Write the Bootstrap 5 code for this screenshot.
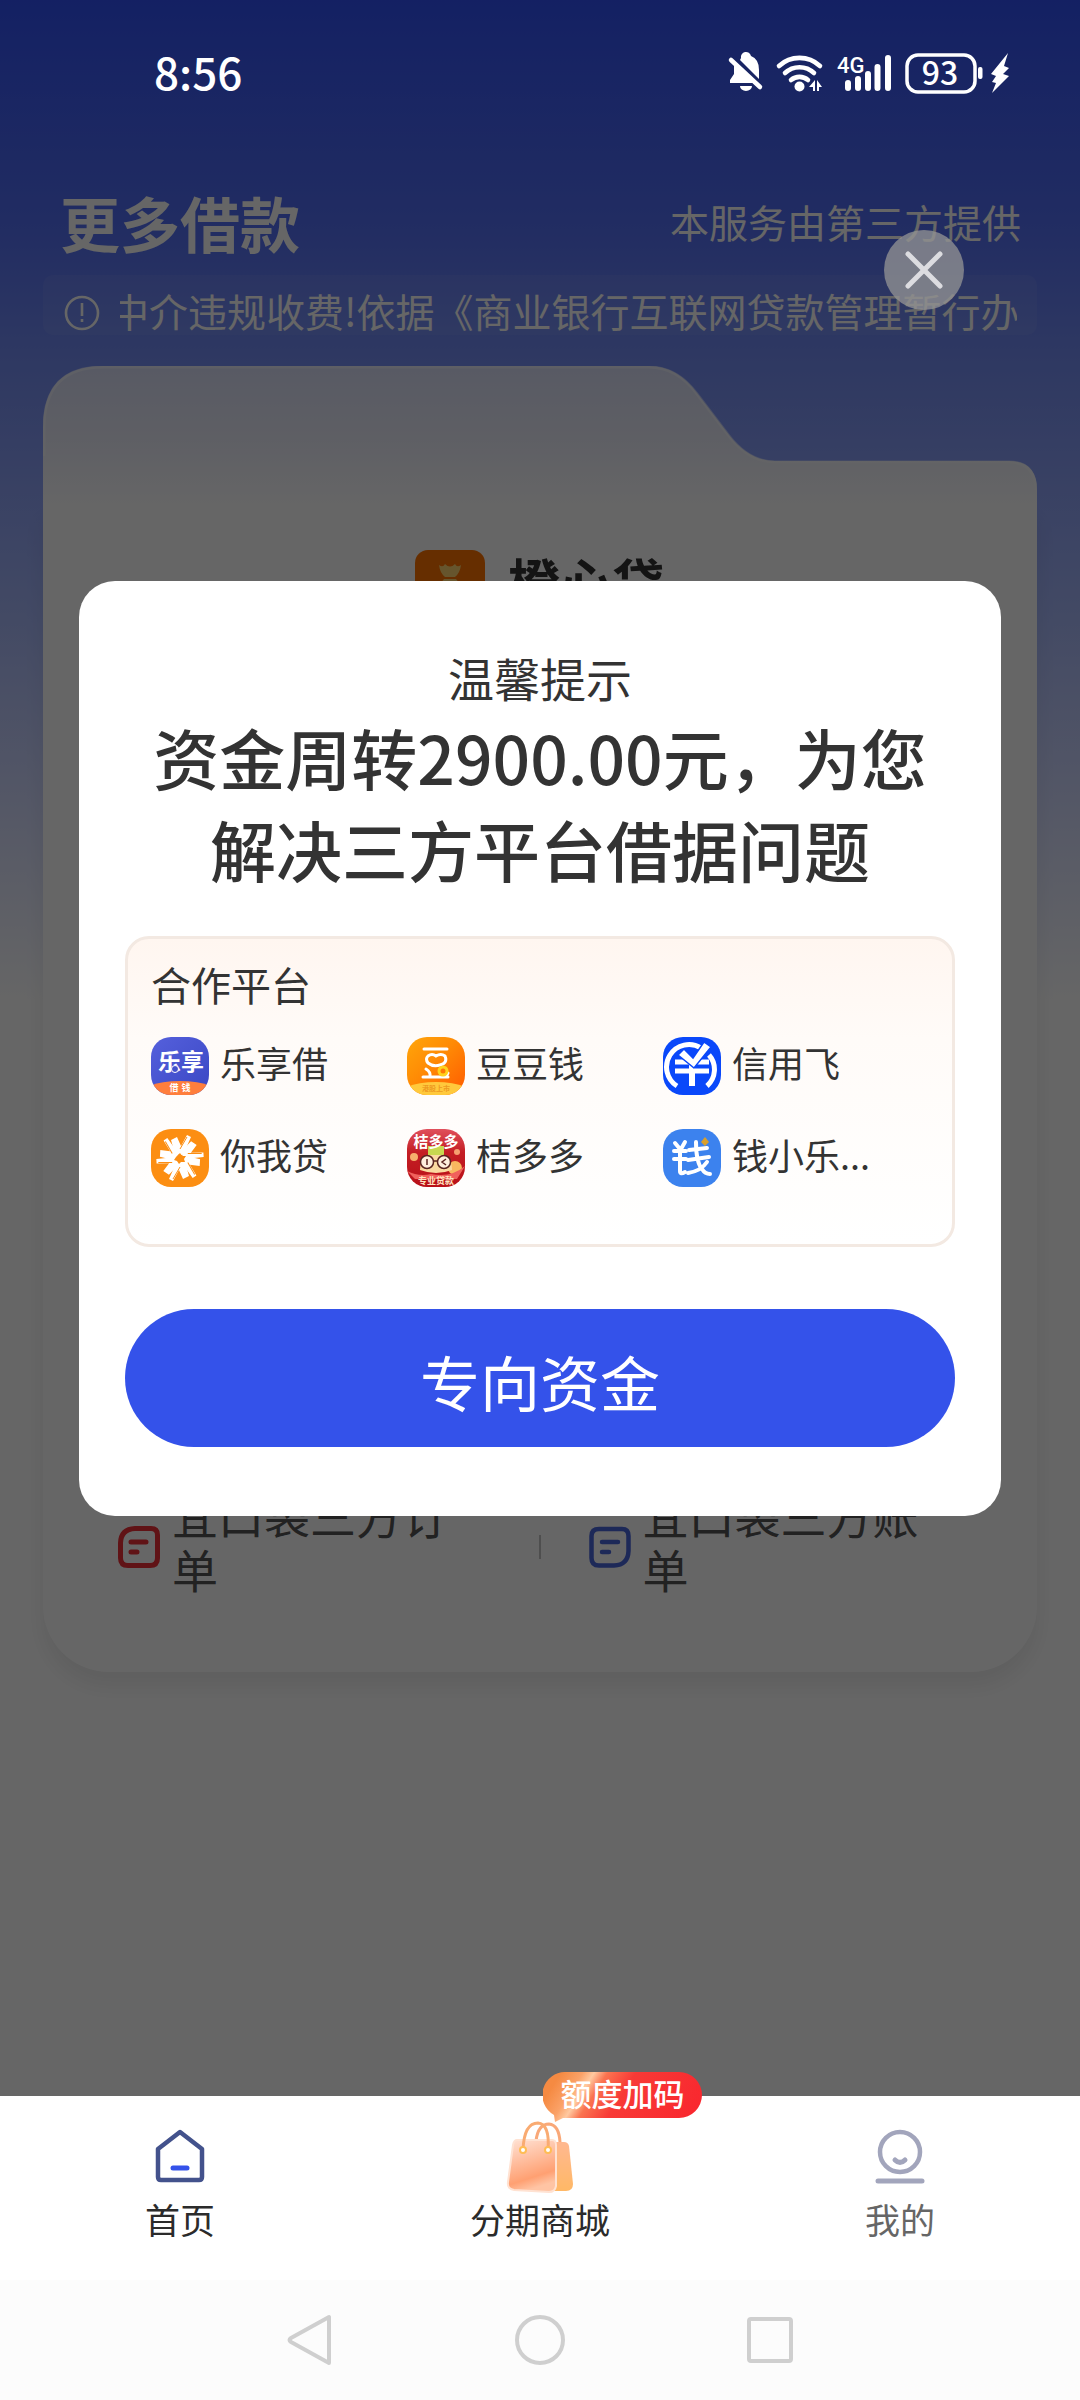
<!DOCTYPE html>
<html lang="zh-CN">
<head>
<meta charset="utf-8">
<meta name="viewport" content="width=device-width, initial-scale=1">
<title>更多借款</title>
<link rel="stylesheet" href="https://cdn.jsdelivr.net/npm/bootstrap@5.3.0/dist/css/bootstrap.min.css">
<style>
  body { font-family: "Noto Sans CJK SC", sans-serif; color: #333; background: #fff; }
  a { color: inherit; text-decoration: none; }
  svg { display: block; flex-shrink: 0; }
  .screen { background: linear-gradient(180deg, #3252f8 0, #5570f5 230px, #738cf5 350px, #a8b9fb 620px, #d2daff 800px, #fff 1000px); }
  .status-bar { height: 146px; padding: 0 65px 4px 154px; z-index: 3; color: #fff; }
  .status-bar svg { margin-top: 4px; }
  .clock { font-size: 44px; line-height: 54px; font-weight: 500; }
  .page-head { height: 129px; padding: 0 59px 0 60px; color: #fff; }
  .page-title { font-size: 60px; line-height: 152px; font-weight: 700; }
  .provider { font-size: 39px; line-height: 150px; }
  .notice { height: 60px; margin: 0 43px; padding: 0 20px 0 21px; gap: 20px; color: #fff; font-size: 39px; background: rgba(255,255,255,.06); border-radius: 10px; }
  .notice-text { line-height: 70px; height: 70px; text-indent: -10px; }
  .folder { margin: 31px 43px 424px; }
  .folder-tab { width: 100%; height: 140px; }
  .folder-body { background: #fff; border-radius: 0 0 66px 66px; padding: 44px 76px 65px 75px; box-shadow: 0 14px 20px rgba(0,0,0,.07); }
  .brand { gap: 23px; height: 70px; font-size: 52px; font-weight: 700; line-height: 62px; color: #333; }
  .entries { margin-top: 867px; font-size: 46px; line-height: 54px; color: #555; }
  .entry { gap: 12px; flex: 1 1 0; }
  .entry span { padding-bottom: 12px; }
  .entry:first-child { padding-right: 48px; }
  .entry:last-child { padding-left: 48px; }
  .entry-rule { width: 2px; height: 24px; background: #c4c4c4; }
  .shade { background: rgba(0,0,0,.6); z-index: 2; padding: 0 79px; }
  .close-btn { top: 230px; right: 116px; width: 80px; height: 80px; border-radius: 50%; background: rgba(150,150,150,.75); }
  .dialog { border-radius: 36px; padding: 63px 46px 69px; }
  .dialog-hint { font-size: 46px; line-height: 66px; }
  .dialog-title { font-size: 66px; line-height: 92px; font-weight: 500; margin: 0 0 42px; }
  .partners { border: 3px solid #f3e9e2; border-radius: 24px; background: linear-gradient(180deg, #fff6f0 0, #fffbf8 100px, #fff 100%); padding: 17px 33px 57px 23px; }
  .partners-title { font-size: 40px; line-height: 56px; margin: 0 0 25px; font-weight: 400; }
  .partner-list { row-gap: 34px; font-size: 36px; }
  .partner { gap: 11px; }
  .partner span { line-height: 51px; }
  .go-btn { margin-top: 62px; height: 138px; border: 0; border-radius: 69px; background: #3452ea; color: #fff; font-size: 60px; line-height: 90px; padding: 6px 0 0; }
  .tab-bar { height: 184px; z-index: 4; font-size: 35px; line-height: 50px; color: #2b2b2b; }
  .tab-item { flex: 1 1 0; padding-top: 22px; }
  .tab-item.dim { color: #666; }
  .tip { left: 50%; top: -24px; margin-left: 3px; width: 159px; height: 54px; }
  .tip-text { left: 0; top: 0; width: 159px; line-height: 41px; font-size: 31px; font-weight: 500; color: #fff; }
  .sys-nav { height: 120px; background: #fcfcfc; padding: 0 285px; }
  .sys-nav button { border: 0; background: none; padding: 0; }
</style>
<script src="https://cdn.jsdelivr.net/npm/bootstrap@5.3.0/dist/js/bootstrap.bundle.min.js"></script>
</head>
<body class="d-flex flex-column min-vh-100">
<main class="screen position-relative flex-grow-1">
  <div class="status-bar d-flex align-items-center justify-content-between position-relative">
    <span class="clock">8:56</span>
    <svg width="290" height="46" viewBox="725 50 290 46" fill="#fff" aria-label="状态">
      <path d="M741 58a5 5 0 0 1 10-2q8 3 8 14v9L740 60zM734 62l24 21H730v-3l4-6zM740 86h12a6 5 0 0 1-12 0z"/>
      <path d="M731 60l29 27" stroke="#fff" stroke-width="4.500" stroke-linecap="round"/>
      <g fill="none" stroke="#fff" stroke-width="4.600" stroke-linecap="round"><path d="M779 66a30 30 0 0 1 41 0"/><path d="M785 73a21 21 0 0 1 29 0"/><path d="M791 80a13 13 0 0 1 17 0"/></g>
      <circle cx="799.500" cy="86.500" r="5"/>
      <path d="M815 80v11h-2v-4h-4zM817 91V80l5 7h-3v4z"/>
      <text x="837" y="73" font-size="22" font-weight="500" font-family="Roboto, sans-serif">4G</text>
      <g stroke="#fff" stroke-width="6" stroke-linecap="round"><path d="M848 83v5M858 79v9M868 74v14M877.500 67v21M888 58v30"/></g>
      <rect x="907" y="55" width="68" height="37" rx="11" fill="none" stroke="#fff" stroke-width="3.500"/>
      <text x="940" y="85" font-size="32" font-weight="500" text-anchor="middle">93</text>
      <rect x="978" y="67" width="4.500" height="12" rx="2"/>
      <path d="M1008 53l-17 21 5 2-4 6 4 1-4 10 17-17-6-2 6-6-5-2z"/>
    </svg>
  </div>
  <header class="page-head d-flex align-items-start justify-content-between">
    <h1 class="page-title m-0">更多借款</h1>
    <span class="provider">本服务由第三方提供</span>
  </header>
  <div class="notice d-flex align-items-start">
    <svg width="36" height="60" viewBox="0 0 36 60" fill="none" stroke="#fff" stroke-width="2.600"><circle cx="18" cy="38" r="16"/><path d="M18 28v13M18 44v3"/></svg>
    <div class="notice-text flex-grow-1 overflow-hidden text-nowrap">中介违规收费!依据《商业银行互联网贷款管理暂行办法》</div>
  </div>
  <section class="folder">
    <svg class="folder-tab" viewBox="0 0 994 140" preserveAspectRatio="none">
      <defs><linearGradient id="tabFill" x1="0" y1="0" x2="0" y2="1"><stop offset="0" stop-color="#dce1fb"/><stop offset=".5" stop-color="#ebedfb"/><stop offset="1" stop-color="#fff"/></linearGradient></defs>
      <path d="M0 141V62Q0 0 60 0H606Q634 0 654 27L686 69Q706 95 732 95H966Q994 95 994 124V141z" fill="url(#tabFill)"/>
      <path d="M1 90V62Q1 1 60 1H606Q634 1 654 28L686 70Q706 96 732 96H966Q992 96 993 124" fill="none" stroke="#fff" stroke-opacity=".45" stroke-width="3"/>
    </svg>
    <div class="folder-body">
      <div class="brand d-flex justify-content-center">
        <svg width="70" height="70" viewBox="0 0 70 70"><rect width="70" height="70" rx="13" fill="#ff7300"/><path d="M24 15q4 3 6-1 5 5 10 0 2 4 6 1-1 8-6 12H30q-5-4-6-12zM29 29h12q12 13 12 25-18 10-36 0 0-12 12-25z" fill="#ffd470"/></svg>
        <span>橙心贷</span>
      </div>
      <div class="entries d-flex align-items-center">
        <a href="#" class="entry d-flex align-items-center">
          <svg width="42" height="42" viewBox="0 0 42 42" fill="none" stroke="#f03038" stroke-width="5" stroke-linecap="round"><path d="M17 2.500H33Q39.500 2.500 39.500 9V32Q39.500 39.500 32 39.500H10Q2.500 39.500 2.500 32V17Q3 3 17 2.500z"/><path d="M13 16H28M13 26H19"/></svg>
          <span>宜口袋三方订单</span>
        </a>
        <div class="entry-rule"></div>
        <a href="#" class="entry d-flex align-items-center">
          <svg width="42" height="42" viewBox="0 0 42 42" fill="none" stroke="#4a66dc" stroke-width="4.500" stroke-linecap="round"><path d="M10 3H33Q39.500 3 39.500 10V25Q39 39 25 39.500H10Q2.500 39.500 2.500 32V10Q2.500 3 10 3z"/><path d="M13 16H29M13 26H20"/></svg>
          <span>宜口袋三方账单</span>
        </a>
      </div>
    </div>
  </section>

  <div class="shade position-absolute top-0 start-0 w-100 h-100 d-flex align-items-center">
    <button class="close-btn position-absolute border-0 p-0 d-flex align-items-center justify-content-center" aria-label="关闭">
      <svg width="38" height="38" viewBox="0 0 38 38" stroke="#dcdce0" stroke-width="5" stroke-linecap="round"><path d="M3 3L35 35M35 3L3 35"/></svg>
    </button>
    <div class="dialog bg-white w-100 text-center" role="dialog" aria-labelledby="dlgTitle">
      <div class="dialog-hint">温馨提示</div>
      <h2 class="dialog-title" id="dlgTitle">资金周转2900.00元，为您<br>解决三方平台借据问题</h2>
      <div class="partners text-start">
        <h3 class="partners-title">合作平台</h3>
        <div class="partner-list row gx-0">
          <div class="col-4 partner d-flex">
            <svg width="58" height="58" viewBox="0 0 58 58"><defs><linearGradient id="lx" x1="0" y1="0" x2="1" y2="1"><stop offset="0" stop-color="#5560dc"/><stop offset="1" stop-color="#3a47c4"/></linearGradient><clipPath id="rc"><rect width="58" height="58" rx="20"/></clipPath></defs><g clip-path="url(#rc)"><rect width="58" height="58" fill="url(#lx)"/><ellipse cx="29" cy="62" rx="44" ry="18" fill="#ff7e3c"/><text x="30" y="33" font-size="23" font-weight="700" text-anchor="middle" fill="#fff">乐享</text><circle cx="24" cy="32" r="3.500" fill="#4450cc" stroke="#fff" stroke-width="1"/><text x="23" y="54" font-size="9" font-weight="700" text-anchor="middle" fill="#fff">借</text><text x="35" y="54" font-size="9" font-weight="700" text-anchor="middle" fill="#fff">钱</text></g></svg>
            <span>乐享借</span>
          </div>
          <div class="col-4 partner d-flex">
            <svg width="58" height="58" viewBox="0 0 58 58"><defs><linearGradient id="dd" x1="0" y1="0" x2="1" y2="1"><stop offset="0" stop-color="#ffa60a"/><stop offset=".45" stop-color="#ff8a05"/><stop offset="1" stop-color="#ff5a00"/></linearGradient></defs><g clip-path="url(#rc)"><rect width="58" height="58" fill="url(#dd)"/><ellipse cx="29" cy="62" rx="42" ry="17" fill="#ffc93c"/><g fill="none" stroke="#fff" stroke-width="3" stroke-linecap="round"><path d="M17 12H40M16 40H41M23 40q1-5-4-8M39 40l2-4"/><path d="M21 19q4-3 8 0 5-3 9 0 3 7-5 9-7 2-12-2-3-4 0-7z"/></g><circle cx="36" cy="34" r="4" fill="#ff7a05" stroke="#ffd21c" stroke-width="3"/><text x="29" y="54" font-size="7" font-weight="700" text-anchor="middle" fill="#ee9a20">港股上市</text></g></svg>
            <span>豆豆钱</span>
          </div>
          <div class="col-4 partner d-flex">
            <svg width="58" height="58" viewBox="0 0 58 58"><g clip-path="url(#rc)"><rect width="58" height="58" fill="#0a48fa"/><g fill="none" stroke="#fff" stroke-width="5"><path d="M14 49A22 22 0 0 1 38 11M46 18A22 22 0 0 1 44 49"/><path d="M29 26V49" stroke-width="6"/><path d="M12 25H46M12 34H46" stroke-width="5"/></g><path d="M15 18l6-6 9 9L41 5l7 5L31 31z" fill="#fff" stroke="#0a48fa" stroke-width="1.500"/></g></svg>
            <span>信用飞</span>
          </div>
          <div class="col-4 partner d-flex">
            <svg width="58" height="58" viewBox="0 0 58 58"><g clip-path="url(#rc)"><rect width="58" height="58" fill="#fc8e12"/><defs><g id="ray"><path d="M24 25L20 11l6-3 4 9 6-11 4 2-4 9-5 9z" fill="#fff"/><path d="M29 20L36 8" stroke="#fc8e12" stroke-width="1"/></g></defs><use href="#ray"/><use href="#ray" transform="rotate(60 29 29)"/><use href="#ray" transform="rotate(120 29 29)"/><use href="#ray" transform="rotate(180 29 29)"/><use href="#ray" transform="rotate(240 29 29)"/><use href="#ray" transform="rotate(300 29 29)"/><path d="M29 24l2 3 4 0-2 3 1 3-4 0-2 2-2-3-3-1 2-3z" fill="#fc8e12"/></g></svg>
            <span>你我贷</span>
          </div>
          <div class="col-4 partner d-flex">
            <svg width="58" height="58" viewBox="0 0 58 58"><defs><linearGradient id="jd" x1="0" y1="0" x2="0" y2="1"><stop offset="0" stop-color="#e0505c"/><stop offset=".4" stop-color="#c41e24"/><stop offset="1" stop-color="#b81018"/></linearGradient></defs><g clip-path="url(#rc)"><rect width="58" height="58" fill="url(#jd)"/><circle cx="7" cy="28" r="4" fill="#f6b06c"/><circle cx="48" cy="39" r="7" fill="#f8b860"/><circle cx="50" cy="23" r="3" fill="#f6a070"/><path d="M0 42q12 6 24 3 20 4 34-8l-8 13H8z" fill="#f0615c"/><path d="M13 41q0-16 16-17 16 1 16 17-16 6-32 0z" fill="#fbd9a0"/><path d="M21 17h16v9H21z" fill="#c8d850"/><g fill="#ffeedd" stroke="#5a2420" stroke-width="1.500"><circle cx="20" cy="33" r="6.500"/><circle cx="37" cy="33" r="6.500"/></g><path d="M20 30v6M39 30l-4 3 4 3M26 32h5" fill="none" stroke="#5a2420" stroke-width="1.500"/><text x="29" y="18" font-size="15" font-weight="700" text-anchor="middle" fill="#fff">桔多多</text><text x="29" y="55" font-size="9" font-weight="700" text-anchor="middle" fill="#ffe2c0">专业贷款</text></g></svg>
            <span>桔多多</span>
          </div>
          <div class="col-4 partner d-flex">
            <svg width="58" height="58" viewBox="0 0 58 58"><g clip-path="url(#rc)"><rect width="58" height="58" fill="#3c82ee"/><g fill="none" stroke="#fff" stroke-width="4" stroke-linecap="round" stroke-linejoin="round"><path d="M12 14l5 6M22 13l-4 7M11 22H23M11 30H23M17 22V42q0 4 5 1"/><path d="M26 21l18-2M25 31l21-3M33 13q0 20 6 27 3 5 8 5M44 33q-6 9-19 11"/></g><path d="M42 8l4 5-4 4-4-4z" fill="#d9a02c"/></g></svg>
            <span>钱小乐...</span>
          </div>
        </div>
      </div>
      <button class="go-btn w-100">专向资金</button>
    </div>
  </div>
</main>

<nav class="tab-bar bg-white d-flex position-relative">
  <a href="#" class="tab-item d-flex flex-column align-items-center">
    <svg width="76" height="76" viewBox="0 0 76 76" fill="none" stroke-linejoin="round" stroke-linecap="round"><path d="M38 14L16 31V59Q16 62 19 62H57Q60 62 60 59V31z" stroke="#43528c" stroke-width="4.500"/><path d="M31 50H45" stroke="#3452ea" stroke-width="5"/></svg>
    <span>首页</span>
  </a>
  <a href="#" class="tab-item d-flex flex-column align-items-center position-relative">
    <svg width="76" height="76" viewBox="0 0 76 76"><defs><linearGradient id="bagF" x1="0" y1="0" x2=".3" y2="1"><stop offset="0" stop-color="#ffe3d6"/><stop offset=".8" stop-color="#ffa072"/><stop offset="1" stop-color="#ffc4a4"/></linearGradient><linearGradient id="bagB" x1="0" y1="0" x2="0" y2="1"><stop offset="0" stop-color="#ffb890"/><stop offset="1" stop-color="#ffb866"/></linearGradient></defs><path d="M34 24H62Q66 24 67 28L71 66Q71 73 64 73H36z" fill="url(#bagB)"/><path d="M34 23Q36 6 47 6 57 7 58 24" fill="none" stroke="#f9a878" stroke-width="3"/><path d="M15 22H50Q54 22 54 27V68Q53 74 47 74L12 72Q5 71 6 64L11 27Q12 22 15 22z" fill="url(#bagF)" stroke="#ffe2d2" stroke-width="2"/><path d="M21 32Q22 5 36 5 48 6 46 32" fill="none" stroke="#f9ab72" stroke-width="3"/><circle cx="21" cy="32" r="3" fill="#fff" stroke="#ffbd55" stroke-width="2"/><circle cx="46" cy="32" r="3" fill="#fff" stroke="#ffbd55" stroke-width="2"/></svg>
    <span>分期商城</span>
    <div class="tip position-absolute">
      <svg width="159" height="54" viewBox="0 0 159 54"><defs><linearGradient id="tipG" x1="0" y1=".6" x2="1" y2=".8"><stop offset="0" stop-color="#f58a42"/><stop offset=".13" stop-color="#fba268"/><stop offset=".2" stop-color="#ffc9a0"/><stop offset=".28" stop-color="#fa7450"/><stop offset=".45" stop-color="#f83a36"/><stop offset="1" stop-color="#f9262e"/></linearGradient></defs><path d="M23 0H136A23 23 0 0 1 136 46H20L12 50 11 43A23 23 0 0 1 23 0z" fill="url(#tipG)"/></svg>
      <span class="tip-text position-absolute text-center">额度加码</span>
    </div>
  </a>
  <a href="#" class="tab-item dim d-flex flex-column align-items-center">
    <svg width="76" height="76" viewBox="0 0 76 76" fill="none" stroke="#a2a5bc" stroke-linecap="round"><circle cx="38" cy="34" r="20" stroke-width="4.500"/><path d="M33 42q5 5 10 0" stroke-width="5"/><path d="M16 63H60" stroke-width="5"/></svg>
    <span>我的</span>
  </a>
</nav>
<div class="sys-nav d-flex align-items-center justify-content-between">
  <button aria-label="返回"><svg width="50" height="54" viewBox="0 0 50 54" fill="none" stroke="#cfcfcf" stroke-width="4" stroke-linejoin="round"><path d="M44 4V50L6 29Q3 27 6 25z"/></svg></button>
  <button aria-label="主页"><svg width="50" height="54" viewBox="0 0 50 54" fill="none" stroke="#cfcfcf" stroke-width="4"><circle cx="25" cy="27" r="23"/></svg></button>
  <button aria-label="最近任务"><svg width="50" height="54" viewBox="0 0 50 54" fill="none" stroke="#cfcfcf" stroke-width="4"><rect x="4" y="6" width="42" height="42" rx="2"/></svg></button>
</div>
</body>
</html>
